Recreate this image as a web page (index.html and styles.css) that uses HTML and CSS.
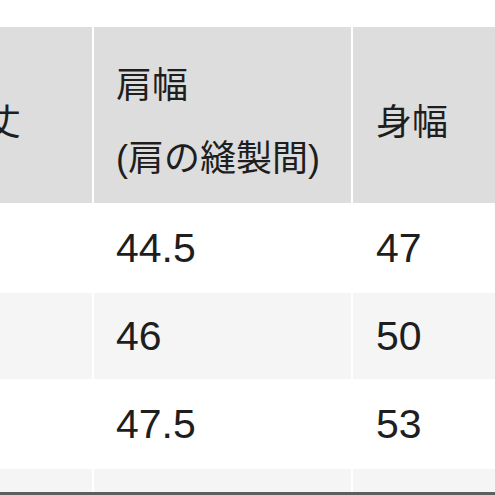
FILE: index.html
```html
<!DOCTYPE html>
<html lang="ja">
<head>
<meta charset="utf-8">
<link rel="stylesheet" href="styles.css">
</head>
<body>
<div class="frame">
  <table class="size-table">
    <thead>
      <tr>
        <th class="c1">着丈</th>
        <th class="c2">肩幅<br>(肩の縫製間)</th>
        <th class="c3">身幅</th>
      </tr>
    </thead>
    <tbody>
      <tr><td class="c1"></td><td class="c2">44.5</td><td class="c3">47</td></tr>
      <tr class="alt"><td class="c1"></td><td class="c2">46</td><td class="c3">50</td></tr>
      <tr><td class="c1"></td><td class="c2">47.5</td><td class="c3">53</td></tr>
      <tr class="alt"><td class="c1"></td><td class="c2"></td><td class="c3"></td></tr>
    </tbody>
  </table>
</div>
</body>
</html>
```

FILE: styles.css
```css
html, body {
  margin: 0;
  padding: 0;
  background: #ffffff;
}
.frame {
  width: 495px;
  height: 495px;
  overflow: hidden;
  border-bottom: 3px solid #5e5e5e;
  padding-top: 25px;
  box-sizing: border-box;
}
.size-table {
  border-collapse: separate;
  border-spacing: 2px;
  margin-left: -75px;
  table-layout: fixed;
  width: 684px;
  font-family: "Liberation Sans", "Noto Sans CJK JP", sans-serif;
  color: #1e1e1e;
}
.c1 { width: 143px; }
.c2 { width: 235px; }
.c3 { width: 300px; }
.size-table th {
  background: #dddddd;
  font-weight: normal;
  font-size: 36px;
  line-height: 73px;
  text-align: left;
  vertical-align: middle;
  padding: 22px 0 8px 22px;
  height: 146px;
  white-space: nowrap;
}
.size-table th.c3 { padding-left: 23px; }
.size-table td {
  background: #ffffff;
  font-size: 41px;
  height: 86px;
  padding: 0 0 0 22px;
  text-align: left;
  vertical-align: middle;
}
.size-table td.c3 { padding-left: 23px; }
.size-table tr.alt td {
  background: #f5f5f5;
}
```
